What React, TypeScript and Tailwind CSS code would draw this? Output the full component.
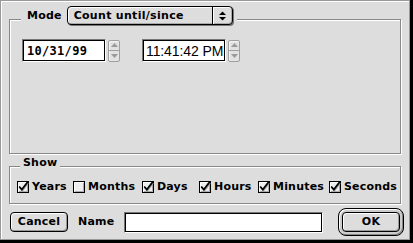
import React from "react";

function CheckBox({ checked }: { checked: boolean }) {
  return (
    <svg width="12" height="12" viewBox="0 0 12 12" className="shrink-0">
      <rect x="0.5" y="0.5" width="11" height="11" fill="#eeeeee" stroke="#000" />
      <path d="M1.5 10V1.5H10" stroke="#ffffff" fill="none" />
      <path d="M2 10.5H10.5V2" stroke="#aaaaaa" fill="none" />
      {checked && (
        <>
          <path d="M3 6.5L5.5 9.5L11 2" stroke="#999999" strokeWidth="1.6" fill="none" />
          <path d="M2.2 5.5L4.8 8.6L10.8 0.8" stroke="#000" strokeWidth="1.7" fill="none" />
        </>
      )}
    </svg>
  );
}

function Stepper() {
  return (
    <div className="ml-[2px] flex h-[22px] w-[12px] flex-col rounded-[2px] border border-[#a0a0a0] bg-[#e2e2e2] shadow-[inset_1px_1px_0_#f4f4f4]">
      <div className="flex flex-1 items-center justify-center border-b border-[#a0a0a0]">
        <svg width="7" height="4" viewBox="0 0 7 4">
          <path d="M0 4L3.5 0L7 4Z" fill="#9a9a9a" />
        </svg>
      </div>
      <div className="flex flex-1 items-center justify-center">
        <svg width="7" height="4" viewBox="0 0 7 4">
          <path d="M0 0L7 0L3.5 4Z" fill="#9a9a9a" />
        </svg>
      </div>
    </div>
  );
}

const items: { label: string; checked: boolean; w: string }[] = [
  { label: "Years", checked: true, w: "w-[56px]" },
  { label: "Months", checked: false, w: "w-[69px]" },
  { label: "Days", checked: true, w: "w-[57px]" },
  { label: "Hours", checked: true, w: "w-[59px]" },
  { label: "Minutes", checked: true, w: "w-[71px]" },
  { label: "Seconds", checked: true, w: "w-[68px]" },
];

export default function App() {
  return (
    <div className="h-[243px] w-[413px] bg-black">
      <div className="flex h-[240px] w-[410px] flex-col border border-[#999999] bg-[#dddddd] font-[family-name:'DejaVu_Sans',sans-serif] text-[11px] font-bold leading-[14px] tracking-[0.2px] text-black shadow-[inset_1px_1px_0_#ffffff]">
        {/* Mode group */}
        <div className="ml-[8px] mt-[18px] h-[135px] w-[392px] shrink-0 border border-[#888888] shadow-[inset_1px_1px_0_#ffffff,1px_1px_0_#ffffff]">
          <div className="-mt-[14px] ml-[11px] flex h-[20px] w-fit items-center bg-[#dddddd] pl-[6px] pr-[4px]">
            <span>Mode</span>
            <div className="ml-[5px] flex h-[19px] w-[166px] self-start rounded-[4px] border border-black bg-[#dddddd] shadow-[1px_1px_0_#777777,inset_1px_1px_0_#ffffff,inset_-1px_-1px_0_#aaaaaa]">
              <div className="flex flex-1 items-center pl-[6px] tracking-[0.3px]">Count until/since</div>
              <div className="flex w-[20px] items-center justify-center border-l border-black shadow-[inset_1px_0_0_#ffffff]">
                <svg width="7" height="10" viewBox="0 0 7 10">
                  <path d="M0 4L3.5 0.5L7 4Z" fill="#000" />
                  <path d="M0 6L7 6L3.5 9.5Z" fill="#000" />
                </svg>
              </div>
            </div>
          </div>
          <div className="mt-[13px] flex items-center pl-[12px]">
            <div className="flex h-[23px] w-[84px] border border-t-[#777777] border-l-[#777777] border-r-white border-b-white">
              <div className="flex flex-1 items-center border border-black bg-white pl-[3px] font-[family-name:'DejaVu_Sans_Mono',monospace] text-[12px] tracking-[0.3px]">
                10/31/99
              </div>
            </div>
            <Stepper />
            <div className="ml-[22px] flex h-[23px] w-[84px] border border-t-[#777777] border-l-[#777777] border-r-white border-b-white">
              <div className="flex flex-1 items-center overflow-hidden whitespace-nowrap border border-black bg-white pl-[2px] font-[family-name:'Liberation_Sans',sans-serif] text-[14px] font-normal tracking-[-0.1px]">
                11:41:42 PM
              </div>
            </div>
            <Stepper />
          </div>
        </div>

        {/* Show group */}
        <div className="ml-[8px] mt-[12px] h-[38px] w-[392px] shrink-0 border border-[#888888] shadow-[inset_1px_1px_0_#ffffff,1px_1px_0_#ffffff]">
          <div className="-mt-[11px] ml-[10px] flex h-[14px] w-fit items-center bg-[#dddddd] px-[3px]">
            <span>Show</span>
          </div>
          <div className="mt-[9px] flex h-[16px] items-center pl-[7px]">
            {items.map((it) => (
              <div key={it.label} className={`flex shrink-0 items-center ${it.w}`}>
                <CheckBox checked={it.checked} />
                <span className="ml-[3px] whitespace-nowrap">{it.label}</span>
              </div>
            ))}
          </div>
        </div>

        {/* Bottom row */}
        <div className="ml-[9px] mt-[4px] flex h-[28px] items-center">
          <div className="flex h-[20px] w-[58px] items-center justify-center rounded-[4px] border border-black bg-[#dddddd] shadow-[inset_1px_1px_0_#ffffff,inset_-1px_-1px_0_#999999]">
            Cancel
          </div>
          <div className="ml-[10px] w-[46px]">Name</div>
          <div className="flex h-[21px] w-[199px] border border-t-[#777777] border-l-[#777777] border-r-white border-b-white">
            <div className="flex-1 border border-black bg-white" />
          </div>
          <div className="ml-[15px] flex h-[28px] w-[66px] items-center justify-center rounded-[8px] border border-black bg-[#cccccc] shadow-[inset_1px_1px_0_#ffffff,inset_-1px_-1px_0_#888888]">
            <div className="flex h-[20px] w-[58px] items-center justify-center rounded-[4px] border border-black bg-[#dddddd] shadow-[inset_1px_1px_0_#ffffff,inset_-1px_-1px_0_#999999]">
              OK
            </div>
          </div>
        </div>
      </div>
    </div>
  );
}
